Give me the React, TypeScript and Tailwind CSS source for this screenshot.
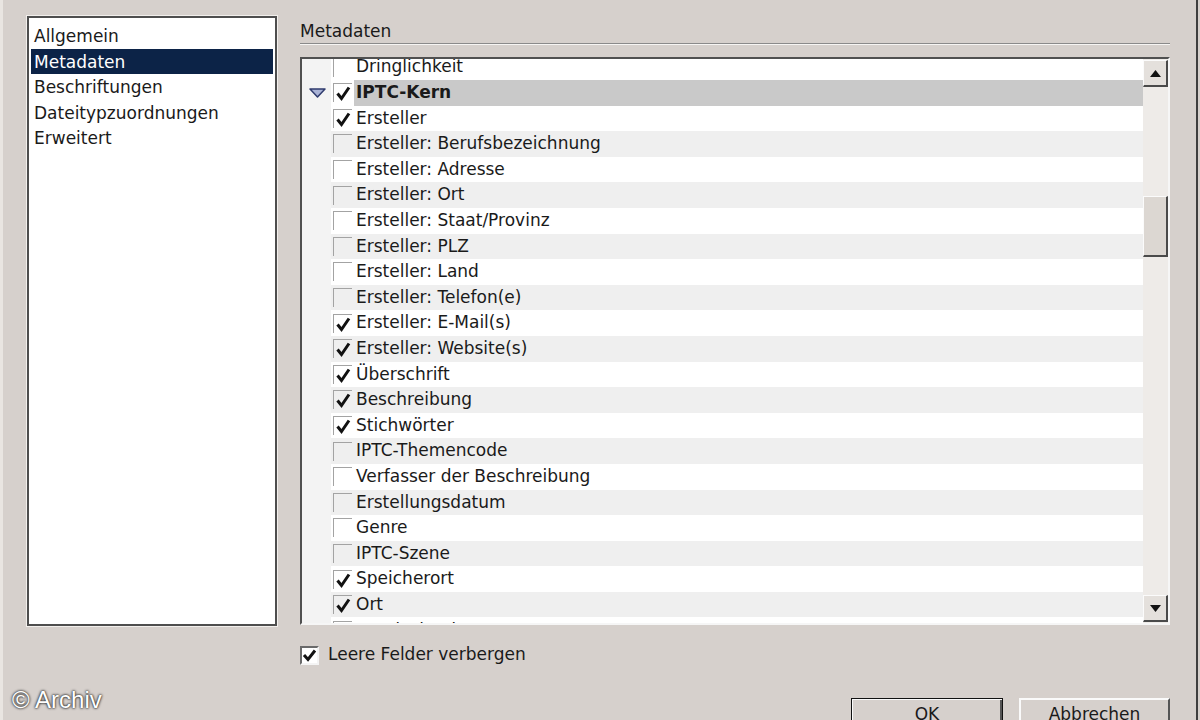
import React from 'react';

type Row = { label: string; checked?: boolean; header?: boolean };

const rows: Row[] = [
  { label: 'Dringlichkeit' },
  { label: 'IPTC-Kern', checked: true, header: true },
  { label: 'Ersteller', checked: true },
  { label: 'Ersteller: Berufsbezeichnung' },
  { label: 'Ersteller: Adresse' },
  { label: 'Ersteller: Ort' },
  { label: 'Ersteller: Staat/Provinz' },
  { label: 'Ersteller: PLZ' },
  { label: 'Ersteller: Land' },
  { label: 'Ersteller: Telefon(e)' },
  { label: 'Ersteller: E-Mail(s)', checked: true },
  { label: 'Ersteller: Website(s)', checked: true },
  { label: 'Überschrift', checked: true },
  { label: 'Beschreibung', checked: true },
  { label: 'Stichwörter', checked: true },
  { label: 'IPTC-Themencode' },
  { label: 'Verfasser der Beschreibung' },
  { label: 'Erstellungsdatum' },
  { label: 'Genre' },
  { label: 'IPTC-Szene' },
  { label: 'Speicherort', checked: true },
  { label: 'Ort', checked: true },
  { label: 'Bundesland/Kanton' },
];

const sections = ['Allgemein', 'Metadaten', 'Beschriftungen', 'Dateitypzuordnungen', 'Erweitert'];

const CheckMark = () => (
  <svg width="19" height="19" viewBox="0 0 19 19" className="block">
    <polyline points="3.5,9.5 7.5,14.5 15,3.5" fill="none" stroke="#111" strokeWidth="3" />
  </svg>
);

// kleine Checkbox in der Metadatenliste
const RowBox = ({ checked }: { checked?: boolean }) => (
  <div className="w-[19px] h-[19px] shrink-0 border-t border-l border-[#a3a3a3]">
    {checked && <CheckMark />}
  </div>
);

const ScrollButton = ({ up }: { up: boolean }) => (
  <div className="h-[27px] flex items-center justify-center bg-[#e4e0dc] border-t border-l border-[#fbfbfb] border-b-2 border-r-2 border-b-[#4a4a4a] border-r-[#4a4a4a]">
    <svg width="11" height="7" viewBox="0 0 11 7">
      {up ? <polygon points="0,7 11,7 5.5,0" fill="#111" /> : <polygon points="0,0 11,0 5.5,7" fill="#111" />}
    </svg>
  </div>
);

const App: React.FC = () => {
  return (
    <div className="w-[1200px] h-[720px] bg-[#d6d0cc] relative overflow-hidden flex border-l-[3px] border-[#e9e5e1] font-['DejaVu_Sans',sans-serif] text-[17px] text-[#1a1a1a]">
      {/* linke Liste */}
      <div className="pl-[24px] pt-[16px]">
        <div className="w-[250px] h-[610px] bg-white border-2 border-[#4e4e4e] p-[2px] pt-[5px] shadow-[0_0_0_1px_#f2efec]">
          {sections.map((s) => (
            <div
              key={s}
              className={`h-[25.5px] leading-[26px] pl-[3px] ${s === 'Metadaten' ? 'bg-[#0c2347] text-white' : ''}`}
            >
              {s}
            </div>
          ))}
        </div>
      </div>

      {/* rechter Bereich */}
      <div className="ml-[23px] w-[870px] flex flex-col">
        <div className="pt-[19px] h-[44px] leading-[24px] border-b border-[#8a8a8a] shadow-[0_1px_0_#f7f5f3]">Metadaten</div>

        <div className="mt-[13px] h-[568px] flex border-2 border-t-[#505050] border-l-[#505050] border-b-[#f6f6f6] border-r-[#f6f6f6] bg-white">
          <div className="flex-1 overflow-hidden">
            <div className="mt-[-4.6px]">
              {rows.map((r, i) => {
                const light = i % 2 === 1;
                return (
                  <div key={r.label} className="h-[25.6px] flex items-center">
                    <div className="w-[29px] h-full bg-[#f3f3f3] flex items-center pl-[7px]">
                      {r.header && (
                        <svg width="17" height="10" viewBox="0 0 17 10">
                          <polygon points="1,1 16,1 8.5,9" fill="#aab3d6" stroke="#2f3b6e" strokeWidth="1.5" strokeLinejoin="round" />
                        </svg>
                      )}
                    </div>
                    <div className={`flex-1 h-full flex items-center pl-[2px] ${!r.header && light ? 'bg-[#efefef]' : 'bg-white'}`}>
                      <RowBox checked={r.checked} />
                      <div
                        className={`flex-1 h-full flex items-center pl-[2px] ml-[2px] ${r.header ? 'bg-[#c9c9c9] font-bold' : ''}`}
                      >
                        {r.label}
                      </div>
                    </div>
                  </div>
                );
              })}
            </div>
          </div>

          {/* Scrollleiste */}
          <div className="w-[25px] bg-[#eeebe8] flex flex-col pt-[1px]">
            <ScrollButton up />
            <div className="mt-[109px] h-[61px] bg-[#dcd7d2] border-t border-l border-[#fbfbfb] border-b-2 border-r-2 border-b-[#4a4a4a] border-r-[#4a4a4a]" />
            <div className="flex-1" />
            <ScrollButton up={false} />
            <div className="h-[1px]" />
          </div>
        </div>

        <div className="mt-[20px] h-[20px] flex items-center">
          <div className="w-[19px] h-[19px] bg-white border-2 border-t-[#6a6a6a] border-l-[#6a6a6a] border-b-[#f4f4f4] border-r-[#f4f4f4] flex items-center justify-center">
            <svg width="15" height="15" viewBox="0 0 15 15">
              <polyline points="2,7 6,11.5 13,2.5" fill="none" stroke="#111" strokeWidth="3" />
            </svg>
          </div>
          <span className="ml-[9px]">Leere Felder verbergen</span>
        </div>

        <div className="mt-[33px] flex justify-end gap-[16px]">
          <button className="w-[152px] h-[40px] bg-[#d6d0cc] border border-[#111] shadow-[inset_1px_1px_0_#fafafa,inset_-2px_-2px_0_#555] pb-[6px] text-[17px]">
            OK
          </button>
          <button className="w-[151px] h-[40px] bg-[#d6d0cc] border-t-2 border-l-2 border-[#fafafa] border-r-2 border-b-2 border-r-[#555] border-b-[#555] pb-[6px] text-[17px]">
            Abbrechen
          </button>
        </div>
      </div>

      <div className="ml-[26px] w-[2px] h-full bg-[#3e3e3e]" />

      <div className="absolute left-[9px] top-[682px] text-white text-[24px] font-['Liberation_Sans',sans-serif] [text-shadow:0_0_3px_#222,0_0_2px_#222]">
        © Archiv
      </div>
    </div>
  );
};

export default App;
